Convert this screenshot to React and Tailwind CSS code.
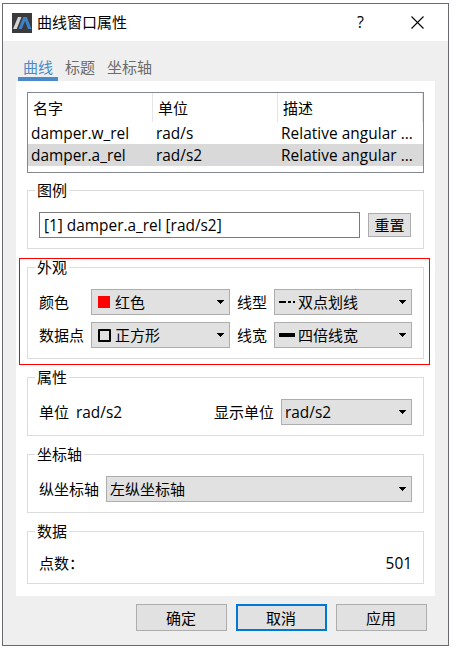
import React from "react";

const Latin = ({ children, className = "" }) => (
  <span className={`text-[15.4px] whitespace-pre ${className}`}>{children}</span>
);

function Caret() {
  return (
    <svg width="7" height="4" viewBox="0 0 7 4" className="ml-auto shrink-0" shapeRendering="crispEdges">
      <path d="M0 0H7V1H6V2H5V3H4V4H3V3H2V2H1V1H0Z" fill="#000" />
    </svg>
  );
}

function Combo({ children, className }) {
  return (
    <div className={`flex h-[26px] shrink-0 items-center border border-[#adadad] bg-[#e1e1e1] pr-[5px] ${className}`}>
      {children}
      <Caret />
    </div>
  );
}

function Group({ title, className, children }) {
  return (
    <fieldset className={`w-[397px] border border-[#dcdcdc] ${className}`}>
      <legend className="ml-[7px] px-[2px] leading-[21px]">{title}</legend>
      {children}
    </fieldset>
  );
}

function TableRow({ cells, selected }) {
  return (
    <div className={`flex h-[22px] items-center ${selected ? "bg-[#d9d9d9]" : ""}`}>
      <div className="w-[125px] pl-[3px]"><Latin>{cells[0]}</Latin></div>
      <div className="w-[125px] pl-[3px]"><Latin>{cells[1]}</Latin></div>
      <div className="pl-[3px]"><Latin className="tracking-[0.05px]">{cells[2]}</Latin></div>
    </div>
  );
}

export default function App() {
  return (
    <div className="h-[650px] w-[456px] overflow-hidden bg-white pl-[2px] pt-[3px] font-['Open_Sans','Noto_Sans_CJK_SC',sans-serif] text-[15px] leading-[21px] text-black">
      <div className="flex h-[643px] w-[447px] flex-col border border-[#6a6a6e] bg-[#efefef]">
        <header className="flex h-[37px] shrink-0 items-center bg-white pl-[9px] pr-[24px]">
          <svg width="20" height="20" viewBox="0 0 20 20">
            <rect width="20" height="20" fill="#3b3b3d" />
            <path d="M1 16L6 4H9.5L4.7 16Z" fill="#d4d4d4" />
            <path d="M6.5 16L11.3 4H14.8L19.5 16H16L13 8L9.8 16Z" fill="#3c82c8" />
          </svg>
          <span className="ml-[5px]">曲线窗口属性</span>
          <span className="ml-auto text-[16px]">?</span>
          <svg className="ml-[47px]" width="13" height="13" viewBox="0 0 13 13">
            <path d="M0.5 0.5L12.5 12.5M12.5 0.5L0.5 12.5" stroke="#000" strokeWidth="1.1" />
          </svg>
        </header>

        <nav className="flex h-[40px] shrink-0 items-end pl-[15px] text-[#6b6b6b]">
          <div className="flex h-[24px] w-[40px] justify-center border-b-4 border-[#4a8ac9] text-[#4a8ac9]">曲线</div>
          <div className="ml-[7px] h-[24px]">标题</div>
          <div className="ml-[12px] h-[24px]">坐标轴</div>
        </nav>

        <main className="ml-[13px] h-[515px] w-[419px] shrink-0 bg-white pl-[11px] pt-[11px]">
          <div className="h-[81px] w-[397px] border border-[#828790]">
            <div className="flex h-[29px] items-center">
              <div className="flex h-full w-[125px] items-center border-r border-[#e5e5e5] pl-[5px] pt-[2px]">名字</div>
              <div className="flex h-full w-[125px] items-center border-r border-[#e5e5e5] pl-[5px] pt-[2px]">单位</div>
              <div className="flex h-full w-[145px] items-center border-r border-[#e5e5e5] pl-[5px] pt-[2px]">描述</div>
            </div>
            <TableRow cells={["damper.w_rel", "rad/s", "Relative angular ..."]} />
            <TableRow cells={["damper.a_rel", "rad/s2", "Relative angular ..."]} selected />
          </div>

          <Group title="图例" className="mt-[7px] h-[69px]">
            <div className="flex items-center pl-[11px] pt-[11px]">
              <div className="flex h-[26px] w-[321px] items-center border border-[#7a7a7a] pl-[4px]">
                <Latin>[1] damper.a_rel [rad/s2]</Latin>
              </div>
              <div className="ml-[8px] flex h-[24px] w-[43px] items-center justify-center border border-[#adadad] bg-[#e1e1e1]">重置</div>
            </div>
          </Group>

          <div className="relative mt-[8px]">
            <Group title="外观" className="h-[102px]">
              <div className="flex flex-col gap-[7px] pl-[11px] pt-[11px]">
                <div className="flex items-center">
                  <span className="w-[52px]">颜色</span>
                  <Combo className="w-[139px] pl-[6px]">
                    <span className="h-[12px] w-[12px] bg-[#ff0000]" />
                    <span className="ml-[5px]">红色</span>
                  </Combo>
                  <span className="ml-[7px] w-[37px]">线型</span>
                  <Combo className="w-[138px] pl-[4px]">
                    <svg width="16" height="2" viewBox="0 0 16 2" shapeRendering="crispEdges">
                      <path d="M0 0H7V2H0ZM9 0H12V2H9ZM14 0H16V2H14Z" fill="#000" />
                    </svg>
                    <span className="ml-[3px]">双点划线</span>
                  </Combo>
                </div>
                <div className="flex items-center">
                  <span className="w-[52px] whitespace-nowrap">数据点</span>
                  <Combo className="w-[139px] pl-[6px]">
                    <span className="h-[13px] w-[13px] rounded-[1px] border-2 border-black" />
                    <span className="ml-[4px]">正方形</span>
                  </Combo>
                  <span className="ml-[7px] w-[37px]">线宽</span>
                  <Combo className="w-[138px] pl-[4px]">
                    <span className="h-[4px] w-[16px] bg-black" />
                    <span className="ml-[3px]">四倍线宽</span>
                  </Combo>
                </div>
              </div>
            </Group>
            <div className="absolute left-[-8px] top-[1px] h-[107px] w-[411px] border border-[#ff0000]" />
          </div>

          <Group title="属性" className="mt-[8px] h-[69px]">
            <div className="flex items-center pl-[11px] pr-[11px] pt-[11px]">
              <span>单位</span>
              <Latin className="ml-[7px]">rad/s2</Latin>
              <span className="ml-auto mr-[7px]">显示单位</span>
              <Combo className="w-[131px] pl-[3px]"><Latin>rad/s2</Latin></Combo>
            </div>
          </Group>

          <Group title="坐标轴" className="mt-[8px] h-[69px]">
            <div className="flex items-center pl-[11px] pt-[11px]">
              <span className="w-[67px]">纵坐标轴</span>
              <Combo className="w-[306px] pl-[3px]">左纵坐标轴</Combo>
            </div>
          </Group>

          <Group title="数据" className="mt-[8px] h-[63px]">
            <div className="flex items-center justify-between pl-[11px] pr-[11px] pt-[11px]">
              <span>点数：</span>
              <Latin>501</Latin>
            </div>
          </Group>
        </main>

        <footer className="flex gap-[9px] pl-[133px] pt-[8px]">
          <div className="flex h-[27px] w-[91px] items-center justify-center border border-[#adadad] bg-[#e1e1e1] pt-[2px] pr-px">确定</div>
          <div className="flex h-[27px] w-[91px] items-center justify-center border-2 border-[#0078d7] bg-[#e1e1e1] pt-[2px] pr-px">取消</div>
          <div className="flex h-[27px] w-[91px] items-center justify-center border border-[#adadad] bg-[#e1e1e1] pt-[2px] pr-px">应用</div>
        </footer>
      </div>
    </div>
  );
}
